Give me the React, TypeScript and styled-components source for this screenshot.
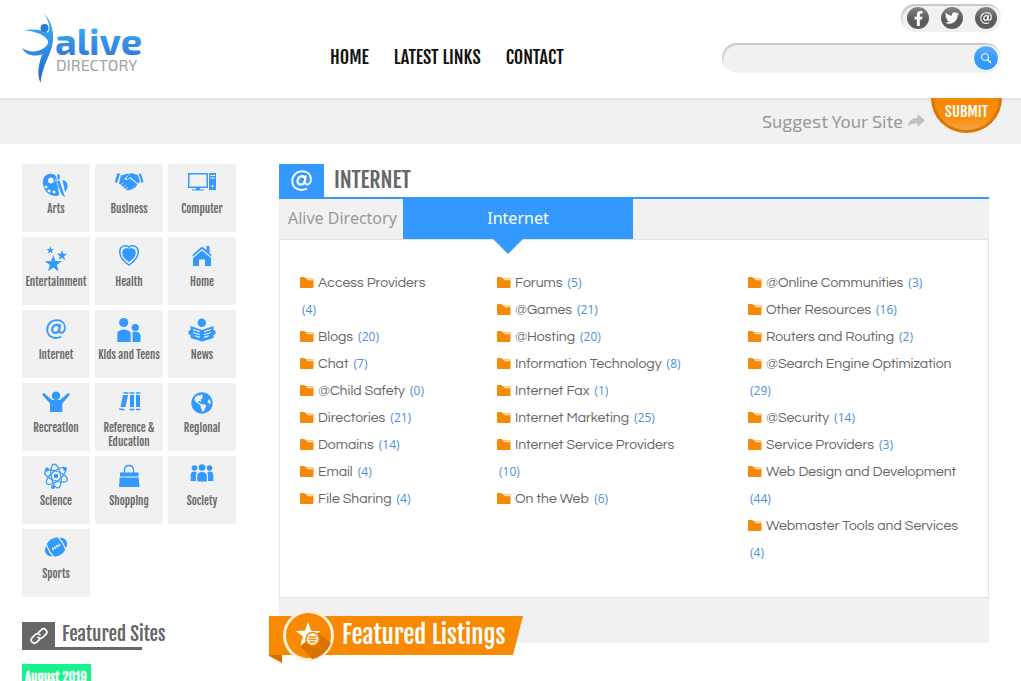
import React from "react";
import styled, { createGlobalStyle } from "styled-components";
import { FaFacebookF, FaTwitter, FaGlobeAmericas } from "react-icons/fa";

const condensed = `"Fjalla One", "Roboto Condensed", "Open Sans Condensed", "Liberation Sans Narrow", "Liberation Sans", sans-serif`;
const blue = "#3399ff";
const orange = "#f98900";
const grey = "#f1f1f1";
const dark = "#666666";

const GlobalStyle = createGlobalStyle`
  * { box-sizing: border-box; }
  html { scrollbar-width: none; }
  body { margin: 0; background: #fff; color: ${dark}; font-family: Lato, sans-serif; }
  a { color: inherit; text-decoration: none; }
  h1, h2, ul { margin: 0; padding: 0; font-weight: 400; }
  ul { list-style: none; }
  svg { display: block; }
`;

const Header = styled.header`
  display: flex;
  align-items: flex-start;
  height: 98px;
  padding: 0 20px 0 22px;
`;

const LogoLink = styled.a`
  padding-top: 12px;
`;

const Nav = styled.nav`
  display: flex;
  gap: 25px;
  margin-left: 188px;
  padding-top: 44px;
  color: #111;
  font: 18px/26px ${condensed};
`;

const HeaderTools = styled.div`
  display: flex;
  flex-direction: column;
  align-items: flex-end;
  gap: 11px;
  width: 279px;
  margin-left: auto;
  padding-top: 4px;
`;

const SocialPill = styled.div`
  display: flex;
  justify-content: space-between;
  align-items: center;
  width: 100px;
  height: 28px;
  padding: 0 4px 0 6px;
  border-radius: 14px;
  background: ${grey};
  box-shadow: inset 1px 2px 1px #c8c8c8;
`;

const SocialLink = styled.a`
  display: grid;
  place-items: center;
  width: 22px;
  height: 22px;
  border-radius: 50%;
  background: linear-gradient(#858585, #5c5c5c 55%);
  color: #fff;
`;

const SearchForm = styled.form`
  display: flex;
  align-items: center;
  width: 100%;
  height: 30px;
  padding: 0 2px 0 16px;
  border-radius: 15px;
  background: ${grey};
  box-shadow: inset 1px 2px 1px #c8c8c8;
`;

const SearchInput = styled.input`
  flex: 1;
  min-width: 0;
  border: 0;
  outline: 0;
  background: transparent;
  font: 14px Lato, sans-serif;
`;

const SearchButton = styled.button`
  display: grid;
  place-items: center;
  width: 26px;
  height: 26px;
  padding: 0;
  border: 1px solid #fff;
  border-radius: 50%;
  background: linear-gradient(#62adf8, ${blue} 55%);
  color: #fff;
`;

const SuggestBar = styled.div`
  display: flex;
  justify-content: flex-end;
  align-items: flex-start;
  height: 46px;
  padding-right: 19px;
  background: linear-gradient(#e0e0e0, ${grey} 4px);
`;

const SuggestText = styled.span`
  display: flex;
  align-items: center;
  gap: 5px;
  margin-right: 6px;
  padding-top: 11px;
  color: #999;
  font: 18px/24px "Exo 2", Exo, Roboto, sans-serif;
  svg { color: #c0c0c0; }
`;

const SubmitButton = styled.button`
  width: 71px;
  height: 35px;
  padding: 0 0 4px;
  border: 3px solid #d97706;
  border-top: 0;
  border-radius: 0 0 36px 36px;
  background: linear-gradient(#fb8500, #f98f0c 60%, #f5a04a);
  color: #fff;
  font: 15px/22px ${condensed};
`;

const Page = styled.div`
  display: flex;
  align-items: flex-start;
  gap: 43px;
  padding: 20px 32px 0 22px;
`;

const Sidebar = styled.aside`
  flex: none;
`;

const TileGrid = styled.ul`
  display: grid;
  grid-template-columns: repeat(3, 68px);
  grid-auto-rows: 68px;
  gap: 5px;
`;

const Tile = styled.a`
  display: flex;
  flex-direction: column;
  align-items: center;
  height: 100%;
  padding-top: 4px;
  background: ${grey};
  color: ${dark};
  text-align: center;
  font: 11px/14px ${condensed};
`;

const TileIcon = styled.svg`
  width: 36px;
  height: 30px;
  margin-bottom: 4px;
  color: ${blue};
`;

const SideHeading = styled.h2`
  display: flex;
  gap: 7px;
  height: 28px;
  margin-top: 25px;
  background: linear-gradient(${dark}, ${dark}) left bottom / 120px 3px no-repeat;
  font: 19px/24px ${condensed};
`;

const SideIcon = styled.span`
  display: grid;
  place-items: center;
  width: 33px;
  height: 28px;
  background: ${dark};
  color: #fff;
`;

const MonthTag = styled.span`
  display: inline-block;
  margin-top: 14px;
  padding: 0 4px 0 3px;
  background: #17f38c;
  color: #fff;
  font: 700 13px/26px ${condensed};
`;

const Main = styled.main`
  flex: 1;
  min-width: 0;
`;

const TitleRow = styled.div`
  display: flex;
  gap: 10px;
  border-bottom: 2px solid ${blue};
`;

const TitleIcon = styled.span`
  display: grid;
  place-items: center;
  width: 45px;
  height: 33px;
  background: ${blue};
  color: #fff;
`;

const Title = styled.h1`
  font: 22px/31px ${condensed};
`;

const Crumbs = styled.nav`
  display: flex;
  height: 40px;
  background: ${grey};
  color: #999;
  font: 16px/38px "Droid Sans", "Noto Sans", sans-serif;
`;

const Crumb = styled.a`
  width: 124px;
  padding-left: 9px;
  white-space: nowrap;
`;

const CurrentCrumb = styled.span`
  position: relative;
  width: 230px;
  background: ${blue};
  color: #fff;
  text-align: center;
  &::after {
    content: "";
    position: absolute;
    top: 100%;
    left: 50%;
    margin-left: -25px;
    border: 15px solid transparent;
    border-top-color: ${blue};
    border-bottom: 0;
  }
`;

const Panel = styled.section`
  display: grid;
  grid-template-columns: minmax(0, 136fr) minmax(0, 190fr) minmax(0, 215fr);
  column-gap: 61px;
  padding: 30px 25px 30px 20px;
  border: 1px solid #e4e4e4;
`;

const Item = styled.li`
  color: ${dark};
  font: 14px/27px "Questrial", Lato, sans-serif;
`;

const Folder = styled.svg`
  display: inline-block;
  margin-right: 4px;
  vertical-align: -1px;
`;

const Count = styled.span`
  margin-left: 2px;
  color: #4a90d9;
  font: 12px "Open Sans", sans-serif;
`;

const ListingsBand = styled.div`
  height: 45px;
  padding-top: 14px;
  background: ${grey};
`;

const Banner = styled.h2`
  position: relative;
  width: 254px;
  height: 50px;
  margin-left: -10px;
  padding-left: 73px;
  color: #fff;
  font: 25px/46px ${condensed};
`;

const BannerShape = styled.svg`
  position: absolute;
  z-index: -1;
  left: 0;
  top: -3px;
`;

const BannerLayer = styled.div`
  position: relative;
  z-index: 0;
`;

function Logo() {
  return (
    <svg width="120" height="72" viewBox="0 0 120 72" role="img" aria-label="Alive Directory">
      <defs>
        <linearGradient id="word" x1="0" y1="0" x2="0" y2="1">
          <stop offset="0.15" stopColor="#31b4f4" />
          <stop offset="0.85" stopColor="#3878dc" />
        </linearGradient>
        <linearGradient id="body" x1="0" y1="0" x2="0" y2="1">
          <stop offset="0" stopColor="#43aef0" />
          <stop offset="0.5" stopColor="#318ee8" />
          <stop offset="1" stopColor="#2463b5" />
        </linearGradient>
      </defs>
      <g fill="url(#body)">
        <path d="M22 1.500C29 8 33 21 30.500 32C29 42 20 54 18.500 71C14.500 61 17 50 20.500 42C13 45 4 44 0 36C7 41 16 40 22 36C25 34 27 31 25.500 28C22 22 12 19 2 18.500C10 16.500 19 18 26 20.500C29 17 27 9 22 1.500Z" />
        <circle cx="22.500" cy="16" r="4" fill="#2a79d6" />
      </g>
      <text x="33" y="43" fontFamily="'Exo 2', Exo, Roboto, sans-serif" fontWeight="700" fontSize="38" fill="url(#word)">alive</text>
      <text x="34" y="59" fontFamily="'Exo 2', Exo, Roboto, sans-serif" fontSize="16" fill="#a3a3a3">DIRECTORY</text>
    </svg>
  );
}

function AtGlyph({ size }: { size: number }) {
  return (
    <svg width={size} height={size} viewBox="0 0 24 24" fill="none" stroke="currentColor" strokeLinecap="round" aria-hidden>
      <path d="M17.5 21.600C9 25 1.500 20.500 1.500 12.500C1.500 6 6.500 1.400 12.800 1.400C19 1.400 22.700 5.300 22.700 10.500C22.700 14 20.800 16.500 18.400 16.500C16.500 16.500 15.700 15 16 13L16.800 7" strokeWidth="2.2" />
      <path d="M16.300 10C15.500 6 8.100 5.700 7.500 12.500C7.200 18 14.500 18 15.900 12.500" strokeWidth="2.600" />
    </svg>
  );
}

function star(cx: number, cy: number, r: number) {
  return Array.from({ length: 10 }, (_, i) => {
    const radius = i % 2 ? r * 0.4 : r;
    const angle = (Math.PI * i) / 5 - Math.PI / 2;
    return `${cx + radius * Math.cos(angle)},${cy + radius * Math.sin(angle)}`;
  }).join(" ");
}

const icons: Record<string, React.ReactNode> = {
  Arts: (
    <>
      <path fillRule="evenodd" d="M14 6C8 5 4 10 5 16C6 24 12 28 18 28C21 28 22 26 20.500 23L17 12C20 9 17 6 14 6ZM12.500 9.500a3 3 0 1 0 2 5.500a3 3 0 0 0-2-5.500ZM8 17.500a1.500 1.500 0 1 0 .1 0ZM11 21.500a1.500 1.500 0 1 0 .1 0ZM16 22.500a1.500 1.500 0 1 0 .1 0Z" />
      <path d="M20 6c2 0 2 3 1.700 5l-1 1c-2-2-2-4-.7-6ZM19 13l2.500-.5L27 29c-2-1-3-2-4-4ZM18.500 10c1 0 0 2 0 4l3 8c-3-3-5-8-3-12ZM24.500 12c6 1 6.500 8 2.500 12Z" />
    </>
  ),
  Business: (
    <>
      <path d="M6.500 5L9 5.800L6 15L3.800 14ZM29.800 5.500L27.800 6.300L30.500 15L32.500 14Z" />
      <path d="M10 7C12 8 14 6 16.500 5.500L18.500 6L13.500 10.500C14 12.500 16.500 12 19 10.500L25.500 15.500C27 17 26 18 24.500 17.500L25 18.500C25 20 23.500 20 22.500 19.500C22.500 21.500 21 22 19.500 21.200C18.500 23 16 22.500 14.500 21L8 15.500Z" />
      <path d="M19 5.500C22 4.500 24 6.500 27 7L29 14L27 15.500L19.500 9.300C18 10.500 16 11.500 15 10.500Z" />
      <path d="M10 17.500l2-2.500M12.300 19.500l2.200-2.700M15 21.300l1.800-2.300" stroke={grey} strokeWidth="0.800" />
    </>
  ),
  Computer: (
    <>
      <path fillRule="evenodd" d="M4 5H24V20H4ZM5.500 6.500V18.500H22.500V6.500ZM12 20h4v1.500h4V22.500H8V21.500h4Z" />
      <path fillRule="evenodd" d="M25 5h7v17h-7ZM26 7h5v1h-5ZM26 9.500h5v1h-5ZM28.500 17a1 1 0 1 0 .1 0Z" />
    </>
  ),
  Entertainment: (
    <>
      <polygon points={star(12.3, 9.3, 4)} />
      <polygon points={star(24, 14.500, 5.500)} />
      <polygon points={star(15.300, 23, 9)} />
    </>
  ),
  Health: (
    <>
      <path d="M18 6C14 3.500 8.500 5 8.800 11C9 18 15 22 18 24C21 22 27 18 27.200 11C27.500 5 22 3.500 18 6Z" fill="none" stroke="currentColor" strokeWidth="1.5" />
      <path d="M18 7.500C15 6.500 11 7.500 11.300 12C11.500 17 16 19.500 18 21C20 19.500 24.500 17 24.700 12C25 7.500 21 6.500 18 7.500Z" />
    </>
  ),
  Home: (
    <>
      <path d="M8.200 14L18 5.500L22.500 9V5h3v7l2.300 2l-1 1.200L18 8l-8.800 7.200Z" />
      <path d="M9 17L18 9.500L27 17V25h-6v-6.500h-6V25H9Z" />
    </>
  ),
  Internet: (
    <g transform="translate(8 5)">
      <AtGlyph size={20} />
    </g>
  ),
  "Kids and Teens": (
    <>
      <circle cx="12.700" cy="8.500" r="4.600" />
      <path d="M6.300 28V20c0-6 13.400-6 13.400 0v8Z" />
      <circle cx="24.300" cy="13.500" r="3.600" />
      <path d="M21.500 28V18c4-1 8 0 8 4v6Z" />
    </>
  ),
  News: (
    <>
      <circle cx="17.800" cy="8.700" r="4.200" />
      <path d="M6.500 12L18 16L29.500 12V16l2 1v3l-2 1v3L18 27.500L6.500 24V21l-2-1v-3l2-1Z" />
      <path d="M9 15.500l7 2.300M9 18.500l7 2.300M11 21.700l5 1.700M27 15.500l-7 2.300M27 18.500l-7 2.300M25 21.700l-5 1.700" stroke={grey} strokeWidth="1.2" />
    </>
  ),
  Recreation: (
    <>
      <circle cx="18" cy="8.700" r="4.300" />
      <path d="M4 7.500L6 6L14 13H22L30 6L32 7.500L24.300 16.500V25H12V16.500Z" />
    </>
  ),
  "Reference & Education": (
    <>
      <path d="M12 8h5l-2.500 12h-5ZM19 8h4v12h-4ZM25 8h4v12h-4Z" />
      <path d="M12.500 5.500l5 .8M8 22l5.500 .8M18.500 6h5M18.500 22.500h5M25 6h4.500M25 22.500h4.500" stroke="currentColor" strokeWidth="1.600" />
    </>
  ),
  Regional: <FaGlobeAmericas x={7} y={5} size={22} />,
  Science: (
    <g fill="none" stroke="currentColor" strokeWidth="1.2">
      {[20, 80, 140].map((turn) => (
        <ellipse key={turn} cx="18" cy="16" rx="12" ry="4.800" transform={`rotate(${turn} 18 16)`} />
      ))}
      <g fill="currentColor" stroke="none">
        <circle cx="18" cy="16" r="2.300" />
        <circle cx="9" cy="9.500" r="2" />
        <circle cx="27" cy="9" r="2" />
        <circle cx="15" cy="27" r="2" />
      </g>
    </g>
  ),
  Shopping: (
    <>
      <path d="M13.500 13V10c0-6 9-6 9 0v3" fill="none" stroke="currentColor" strokeWidth="1.3" />
      <path d="M9 12.500H27.500V16.500H9ZM8.700 17.500H27.700L28.500 27H8Z" />
    </>
  ),
  Society: (
    <>
      <circle cx="10.500" cy="8" r="2.800" />
      <circle cx="25.500" cy="8" r="2.800" />
      <path d="M6.700 21V15c0-4 4-4 6-2.800C11.500 15 12 18 12 21ZM29.300 21V15c0-4-4-4-6-2.800C24.500 15 24 18 24 21Z" />
      <circle cx="18" cy="7.500" r="3.300" />
      <path d="M13.200 21.500V16c0-5.500 9.600-5.500 9.600 0v5.500Z" />
    </>
  ),
  Sports: (
    <g transform="rotate(-32 18 14)">
      <path d="M11.800 6.500Q18 3.300 24.200 6.500Q26 14 24.200 21.500Q18 24.700 11.800 21.500Q10 14 11.800 6.500Z" />
      <path d="M10.300 8Q8.700 14 10.300 20Q6 18 6 14Q6 10 10.300 8ZM25.700 8Q27.300 14 25.700 20Q30 18 30 14Q30 10 25.700 8Z" />
      <path d="M13.500 14h9M14.500 12.500v3M17 12.500v3M19.500 12.500v3M22 12.500v3" stroke={grey} strokeWidth="0.900" />
    </g>
  ),
};

const columns: [string, number][][] = [
  [["Access Providers", 4], ["Blogs", 20], ["Chat", 7], ["@Child Safety", 0], ["Directories", 21], ["Domains", 14], ["Email", 4], ["File Sharing", 4]],
  [["Forums", 5], ["@Games", 21], ["@Hosting", 20], ["Information Technology", 8], ["Internet Fax", 1], ["Internet Marketing", 25], ["Internet Service Providers", 10], ["On the Web", 6]],
  [["@Online Communities", 3], ["Other Resources", 16], ["Routers and Routing", 2], ["@Search Engine Optimization", 29], ["@Security", 14], ["Service Providers", 3], ["Web Design and Development", 44], ["Webmaster Tools and Services", 4]],
];

export default function App() {
  return (
    <>
      <GlobalStyle />
      <Header>
        <LogoLink href="#"><Logo /></LogoLink>
        <Nav>
          <a href="#">HOME</a>
          <a href="#">LATEST LINKS</a>
          <a href="#">CONTACT</a>
        </Nav>
        <HeaderTools>
          <SocialPill>
            <SocialLink href="#" aria-label="Facebook"><FaFacebookF size={15} /></SocialLink>
            <SocialLink href="#" aria-label="Twitter"><FaTwitter size={14} /></SocialLink>
            <SocialLink href="#" aria-label="Email"><AtGlyph size={12} /></SocialLink>
          </SocialPill>
          <SearchForm>
            <SearchInput type="text" aria-label="Search" />
            <SearchButton type="button" aria-label="Search">
              <svg width="12" height="12" viewBox="0 0 12 12" fill="none" stroke="currentColor">
                <circle cx="5" cy="5" r="3.500" />
                <path d="M7.500 7.500L11 11" strokeWidth="1.500" />
              </svg>
            </SearchButton>
          </SearchForm>
        </HeaderTools>
      </Header>
      <SuggestBar>
        <SuggestText>
          Suggest Your Site
          <svg width="17" height="16" viewBox="0 0 17 16" fill="currentColor" aria-hidden>
            <path d="M9.500 1L17 7.500L9.500 14V10.500C5 10 2 11 0 14C0.500 8 4 5 9.500 4.800Z" />
          </svg>
        </SuggestText>
        <SubmitButton type="button">SUBMIT</SubmitButton>
      </SuggestBar>
      <Page>
        <Sidebar>
          <TileGrid>
            {Object.entries(icons).map(([name, art]) => (
              <li key={name}>
                <Tile href="#">
                  <TileIcon viewBox="0 0 36 30" fill="currentColor" aria-hidden>{art}</TileIcon>
                  {name}
                </Tile>
              </li>
            ))}
          </TileGrid>
          <SideHeading>
            <SideIcon>
              <svg width="20" height="20" viewBox="0 0 20 20" fill="none" stroke="currentColor" strokeWidth="1.700" aria-hidden>
                <g transform="rotate(-45 10 10)">
                  <path d="M8.500 12.800H4a3.200 3.200 0 0 1 0-6.400h4.500a3.200 3.200 0 0 1 2.900 4.200" />
                  <path d="M11.500 7.200H16a3.200 3.200 0 0 1 0 6.400h-4.500a3.200 3.200 0 0 1-2.900-4.200" />
                </g>
              </svg>
            </SideIcon>
            Featured Sites
          </SideHeading>
          <MonthTag>August 2019</MonthTag>
        </Sidebar>
        <Main>
          <TitleRow>
            <TitleIcon><AtGlyph size={21} /></TitleIcon>
            <Title>INTERNET</Title>
          </TitleRow>
          <Crumbs aria-label="Breadcrumb">
            <Crumb href="#">Alive Directory</Crumb>
            <CurrentCrumb>Internet</CurrentCrumb>
          </Crumbs>
          <Panel>
            {columns.map((items, index) => (
              <ul key={index}>
                {items.map(([name, count]) => (
                  <Item key={name}>
                    <Folder width="14" height="11" viewBox="0 0 14 11" aria-hidden>
                      <path d="M0 1Q0 0 1 0H4.500L6 1.500H13.500V10Q13.500 11 12.500 11H1Q0 11 0 10Z" fill="#f58a07" />
                      <path d="M6.500 2H13v1.200H8Z" fill="#ffe2b8" />
                    </Folder>
                    <a href="#">{name}</a> <Count>({count})</Count>
                  </Item>
                ))}
              </ul>
            ))}
          </Panel>
          <ListingsBand>
            <BannerLayer>
              <Banner>
                <BannerShape width="256" height="56" viewBox="0 -8 256 56" aria-hidden>
                  <path d="M0 36H13V46L0 39Z" fill="#d97000" />
                  <path d="M0 -1H254L244 38H0Z" fill={orange} />
                  <circle cx="39.500" cy="18.500" r="24" fill={orange} stroke="#fff1dc" strokeWidth="3" />
                  <path d="M44 12L62 26C58 35 51 41 43 42L32 30Z" fill="#d97400" />
                  <polygon points={star(39, 18, 13)} fill="#fff" />
                  <circle cx="43.500" cy="22" r="6.500" fill="#fff" stroke={orange} strokeWidth="1.500" />
                  <path d="M39.500 20h8M39.500 22.500h8M40.500 25h6" stroke={orange} strokeWidth="1.300" />
                </BannerShape>
                Featured Listings
              </Banner>
            </BannerLayer>
          </ListingsBand>
        </Main>
      </Page>
    </>
  );
}
